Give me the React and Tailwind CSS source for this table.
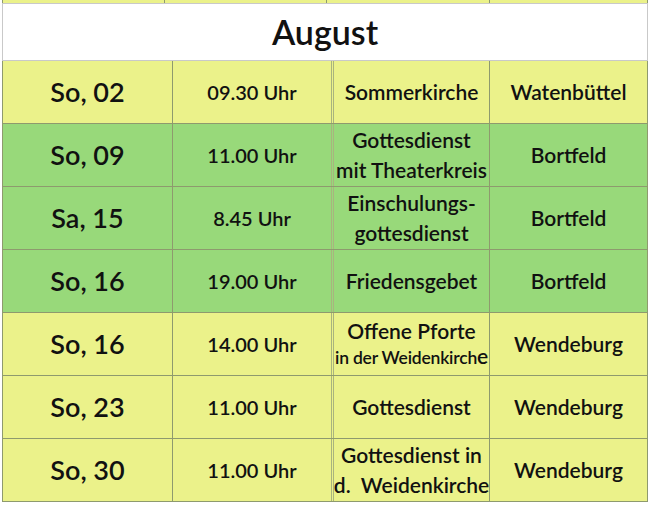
const YELLOW = "bg-[#ebf28a]";
const GREEN = "bg-[#98d97a]";

const rows = [
  { day: "So, 02", time: "09.30 Uhr", what: ["Sommerkirche"], where: "Watenbüttel", green: false },
  { day: "So, 09", time: "11.00 Uhr", what: ["Gottesdienst", "mit Theaterkreis"], where: "Bortfeld", green: true },
  { day: "Sa, 15", time: "8.45 Uhr", what: ["Einschulungs-", "gottesdienst"], where: "Bortfeld", green: true },
  { day: "So, 16", time: "19.00 Uhr", what: ["Friedensgebet"], where: "Bortfeld", green: true },
  { day: "So, 16", time: "14.00 Uhr", what: "pforte", where: "Wendeburg", green: false },
  { day: "So, 23", time: "11.00 Uhr", what: ["Gottesdienst"], where: "Wendeburg", green: false },
  { day: "So, 30", time: "11.00 Uhr", what: ["Gottesdienst in", "d.  Weidenkirche"], where: "Wendeburg", green: false },
];

function What({ what }) {
  if (what === "pforte") {
    return (
      <div className="flex flex-col items-center leading-[25px]">
        <span className="text-[21px]">Offene Pforte</span>
        <span className="whitespace-nowrap text-[17.5px] tracking-[-0.2px]">
          in der Weidenkirch<span className="text-[21px]">e</span>
        </span>
      </div>
    );
  }
  return (
    <div className="flex flex-col items-center text-[21px] leading-[30px]">
      {what.map((l) => (
        <span key={l} className="whitespace-pre">{l}</span>
      ))}
    </div>
  );
}

function Row({ r }) {
  const bg = r.green ? GREEN : YELLOW;
  return (
    <div className={`grid h-[63px] grid-cols-[170px_159px_158px_159px] border-b border-[#8e9a6e] ${bg}`}>
      <div className="flex items-center justify-center border-l border-[#8e9a6e] pt-[1px] text-[27px]">
        {r.day}
      </div>
      <div className="flex items-center justify-center border-l border-[#8e9a6e] text-[20px]">
        {r.time}
      </div>
      <div className="flex items-center justify-center border-l-[3px] border-double border-[#a9b47e] text-center">
        <What what={r.what} />
      </div>
      <div className="flex items-center justify-center border-x border-[#8e9a6e] text-[21px]">
        {r.where}
      </div>
    </div>
  );
}

export default function App() {
  return (
    <div className="h-[508px] w-[650px] overflow-hidden bg-white font-['Lato','Noto_Sans',sans-serif] font-semibold text-[#111]">
      <div className="ml-[2px] w-[646px]">
        <div className={`grid h-[3px] grid-cols-[162px_162px_163px_159px] ${YELLOW}`}>
          <div className="border-l border-[#8e9a6e]" />
          <div className="border-l border-[#8e9a6e]" />
          <div className="border-l border-[#8e9a6e]" />
          <div className="border-x border-[#8e9a6e]" />
        </div>
        <div className="flex h-[58px] items-center justify-center border border-[#c9c9c9] pb-[1px] text-[34px]">
          August
        </div>
        {rows.map((r, i) => (
          <Row key={i} r={r} />
        ))}
      </div>
    </div>
  );
}
